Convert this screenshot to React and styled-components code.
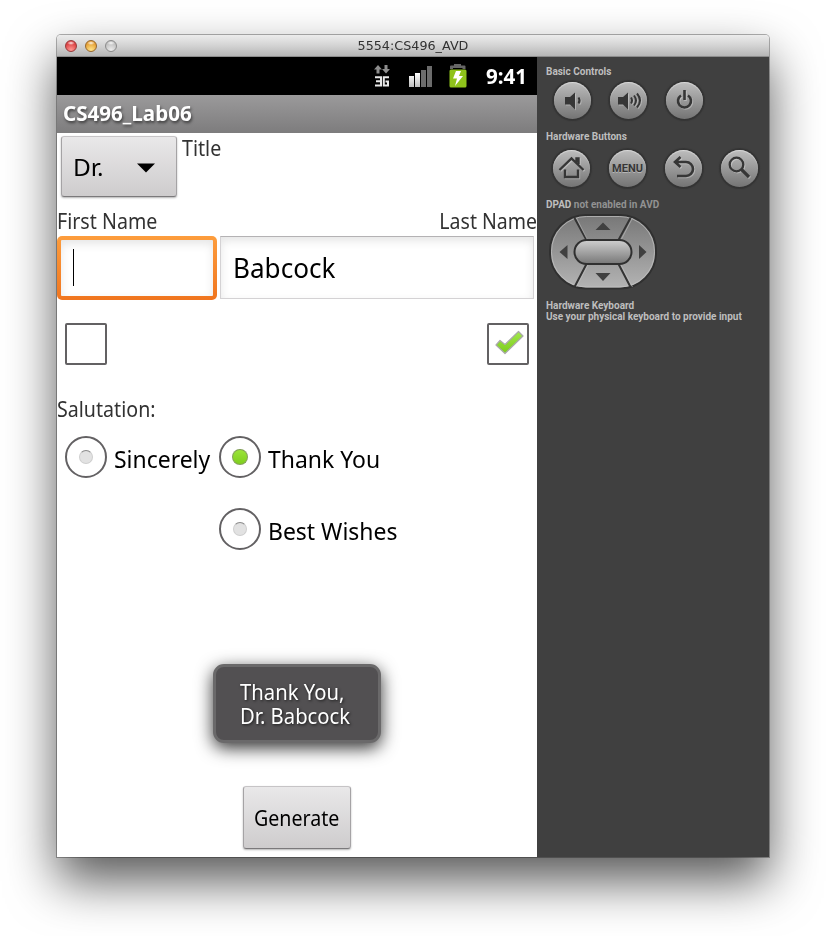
import React from "react";
import styled, { createGlobalStyle } from "styled-components";

const Global = createGlobalStyle`
  * { box-sizing: border-box; }
  body { margin: 0; background: #fff; overflow: hidden; font-family: "Noto Sans", "Open Sans", sans-serif; }
  svg { display: block; }
`;

const Desktop = styled.div`
  width: 826px;
  height: 936px;
  padding: 35px 57px 79px;
  background: #fff;
`;
const Window = styled.div`
  width: 712px;
  height: 822px;
  display: flex;
  flex-direction: column;
  border-radius: 4px 4px 0 0;
  box-shadow: 0 0 0 1px rgba(0, 0, 0, 0.3), 0 24px 50px rgba(0, 0, 0, 0.66);
`;
const TitleBar = styled.header`
  height: 22px;
  flex: none;
  display: grid;
  grid-template-columns: 60px 1fr 60px;
  align-items: center;
  border-radius: 4px 4px 0 0;
  background: linear-gradient(#ececec, #d6d6d6 45%, #b6b6b6);
  border-bottom: 1px solid #8c8c8c;
`;
const Lights = styled.div`
  display: flex;
  gap: 8px;
  padding: 1px 0 0 8px;
`;
const Light = styled.span`
  width: 12px;
  height: 12px;
  border-radius: 50%;
  border: 1px solid ${(p) => p.$ring};
  background: radial-gradient(ellipse 4px 2px at 50% 20%, rgba(255,255,255,.9), transparent),
    radial-gradient(circle at 50% 90%, ${(p) => p.$glow}, ${(p) => p.$color} 75%);
`;
/* Text condensed horizontally by $sx from its $from edge. */
const Text = styled.span`
  display: block;
  white-space: pre;
  font-size: ${(p) => p.$size || 21}px;
  line-height: ${(p) => p.$lh || 24}px;
  font-weight: ${(p) => p.$weight || 400};
  color: ${(p) => p.$color || "#323232"};
  transform: scaleX(${(p) => p.$sx || 0.935});
  transform-origin: ${(p) => p.$from || "left"} center;
`;
const WindowTitle = styled(Text)`
  font-family: "DejaVu Sans", sans-serif;
  text-align: center;
`;
const Body = styled.div`
  height: 800px;
  display: flex;
`;
const Phone = styled.main`
  position: relative;
  width: 480px;
  display: flex;
  flex-direction: column;
  background: #fff;
`;
const StatusBar = styled.div`
  height: 38px;
  display: flex;
  align-items: center;
  gap: 15px;
  background: #000;
  padding-left: 315px;
`;
const Clock = styled(Text)`
  margin-left: 3px;
`;
const AppBar = styled.div`
  height: 38px;
  padding: 6px;
  background: linear-gradient(#9b9a9b, #7d7c7d);
`;
const AppTitle = styled(Text)`
  text-shadow: 1px 2px 3px rgba(0, 0, 0, 0.55);
`;
const SpinnerRow = styled.div`
  display: flex;
  height: 76px;
  padding: 3px 0 0 4px;
  gap: 5px;
`;
const Button = styled.button`
  display: flex;
  align-items: center;
  justify-content: center;
  padding: 0;
  font-family: inherit;
  border: 1px solid;
  border-color: #c6c4c6 #a5a3a5 #7b797b;
  border-radius: 3px;
  background: linear-gradient(#e9e8e9, #cecccd);
  box-shadow: 0 1px 2px rgba(0, 0, 0, 0.3);
`;
const Spinner = styled(Button)`
  width: 116px;
  height: 61px;
  justify-content: space-between;
  padding: 2px 20px 0 11px;
`;
const SpinnerValue = styled(Text)`
  padding-bottom: 2px;
`;
const Generate = styled(Button)`
  width: 108px;
  height: 63px;
  margin: 206px 0 0 186px;
`;
const Spread = styled.div`
  display: flex;
  justify-content: space-between;
  height: ${(p) => p.$h}px;
  padding: ${(p) => p.$pad || "0"};
`;
const Fields = styled.div`
  display: flex;
  align-items: flex-start;
  gap: 3px;
  height: 87px;
`;
const Focused = styled.div`
  width: 160px;
  height: 64px;
  padding: 4px;
  border-radius: 5px;
  background: linear-gradient(#fd9d3d, #f0751f);
`;
const FocusedInner = styled.div`
  height: 100%;
  padding: 9px 0 0 12px;
  border-radius: 1px;
  background: #fff;
  box-shadow: inset 0 4px 10px rgba(0, 0, 0, 0.1);
`;
const Caret = styled.div`
  width: 1px;
  height: 37px;
  background: #000;
`;
const Field = styled.div`
  width: 314px;
  height: 63px;
  padding: 16px 12px;
  border: 1px solid #d4d2d4;
  border-top-color: #b4b2b4;
  background: #fff;
  box-shadow: inset 0 4px 10px rgba(0, 0, 0, 0.1);
`;
const CheckBox = styled.div`
  width: 42px;
  height: 42px;
  border: 2px solid #636163;
  border-radius: 2px;
`;
const Radios = styled.div`
  display: grid;
  grid-template-columns: 154px 1fr;
  grid-auto-rows: 72px;
  padding: 15px 0 0 8px;
`;
const RadioItem = styled.div`
  grid-column: ${(p) => p.$col};
  display: flex;
  gap: 7px;
  height: 42px;
`;
const RadioLabel = styled(Text)`
  padding-top: 8px;
`;
const Ring = styled.span`
  flex: none;
  width: 42px;
  height: 42px;
  border: 2px solid #636163;
  border-radius: 50%;
  display: flex;
  align-items: center;
  justify-content: center;
`;
const Dot = styled.i`
  width: ${(p) => (p.$on ? 16 : 14)}px;
  height: ${(p) => (p.$on ? 16 : 14)}px;
  border-radius: 50%;
  background: ${(p) => (p.$on ? "linear-gradient(#9be43a, #7fce1e)" : "#e2e2e2")};
  border: 1px solid ${(p) => (p.$on ? "#84a05a" : "#cfcfcf")};
  border-top-color: ${(p) => (p.$on ? "#7c9a50" : "#8a8a8a")};
`;
const Toast = styled.div`
  position: absolute;
  left: 156px;
  top: 607px;
  width: 168px;
  height: 79px;
  padding: 13px 0 0 24px;
  border: 3px solid #6a696a;
  border-radius: 11px;
  background: #525052;
  box-shadow: 0 5px 17px rgba(0, 0, 0, 0.8);
`;
const ToastText = styled(Text)`
  text-shadow: 1px 1px 3px rgba(0, 0, 0, 0.7);
`;
const Side = styled.aside`
  width: 232px;
  padding: 9px 0 0 9px;
  background: #404040;
  font-family: Roboto, sans-serif;
`;
const Caption = styled.div`
  height: ${(p) => p.$h || 12}px;
  font-size: 10px;
  line-height: 12px;
  font-weight: 700;
  white-space: nowrap;
  color: #bebebe;
`;
const Faint = styled.span`
  color: #929292;
`;
const Keys = styled.div`
  display: flex;
  gap: 19px;
  padding: ${(p) => p.$pad};
`;
const Key = styled.div`
  width: 37px;
  height: 37px;
  border-radius: 50%;
  display: flex;
  align-items: center;
  justify-content: center;
  background: linear-gradient(#bdbdbd, #747474);
  box-shadow: inset 0 1px 1px rgba(255, 255, 255, 0.45), 0 0 1px 2px #343434;
  color: #363636;
  font-size: 11px;
  font-weight: 700;
  text-shadow: 0 1px 0 rgba(255, 255, 255, 0.35);
  svg { flex: none; filter: drop-shadow(1px 1px 0 rgba(255, 255, 255, 0.3)); }
`;
const Pad = styled.div`
  padding: 3px 0 10px 3px;
`;

const Line = ({ children, w = 2.6 }) => (
  <svg width="31" height="31" viewBox="0 0 31 31" fill="none" stroke="#363636" strokeWidth={w}>{children}</svg>
);
const Speaker = ({ loud }) => (
  <Line w={2}>
    <path d={loud ? "M5 12h5l5-4.500v17L10 19.500H5z" : "M8 12h5l5-4.500v17l-5-5H8z"} fill="#363636" stroke="none" />
    {loud ? <path d="M18 12.500q2 3 0 6M21 10.500q4 5 0 10M24 8.500q6 7 0 14" /> : <path d="M21.500 12.500q2.200 3 0 6" />}
  </Line>
);

const Network = () => (
  <svg width="20" height="26" viewBox="0 0 20 26">
    <path d="M2 6.500L6 2l4 4.500H7.500v4h-3v-4zM10 6h2.500V2h3v4H18l-4 4.500z" fill="#8d8d8d" />
    <path d="M3 14.200h6v8.300H3M4 18.200h5M17 14.200h-5.200v8.300H16v-4h-2.500" fill="none" stroke="#e8e8e8" strokeWidth="2" />
  </svg>
);
const Signal = () => (
  <svg width="26" height="26" viewBox="0 0 26 26">
    <defs>
      <linearGradient id="bar" x1="0" y1="0" x2="0" y2="1"><stop offset="0" stopColor="#fff" /><stop offset="1" stopColor="#bdbdbd" /></linearGradient>
    </defs>
    <path d="M2 13h5v11H2zM8 10h5v14H8z" fill="url(#bar)" />
    <path d="M14 7h5v17h-5zM20 3h5v21h-5z" fill="#6c6c6c" />
  </svg>
);
const Battery = () => (
  <svg width="20" height="26" viewBox="0 0 20 26">
    <path d="M2 6V3.500q0-1 1-1h3V1h7v1.500h3.500q1 0 1 1V6h-3V5H5v1z" fill="#666" />
    <rect x="1.500" y="6.500" width="17" height="18" rx="1.500" fill="#8fc31b" />
    <path d="M8 8h5l-2 5h4L7 23l2-7.500H5z" fill="#fff" />
  </svg>
);
const Dpad = () => (
  <svg width="108" height="76" viewBox="0 0 108 76">
    <defs>
      <linearGradient id="pad" x1="0" y1="0" x2="0" y2="1"><stop offset="0" stopColor="#777" /><stop offset="1" stopColor="#b4b4b4" /></linearGradient>
      <linearGradient id="core" x1="0" y1="0" x2="0" y2="1"><stop offset="0" stopColor="#d0d0d0" /><stop offset="1" stopColor="#777" /></linearGradient>
    </defs>
    <rect x="1" y="1" width="106" height="73.500" rx="36" fill="url(#pad)" stroke="#303030" strokeWidth="2" />
    <rect x="2.500" y="2.500" width="103" height="70.500" rx="35" fill="none" stroke="#c4c4c4" strokeWidth=".7" />
    <path d="M25.500 4l12 22M81.500 4l-12 22M37.500 50l-12 23M69.500 50l12 23" stroke="#333" strokeWidth="2" />
    <path d="M27.500 4l11 22M83.500 4L72 26M39.500 50l-12 23M71.500 50l12 23" stroke="#c0c0c0" strokeWidth=".6" />
    <rect x="25.500" y="26" width="57" height="24" rx="12" fill="url(#core)" stroke="#303030" strokeWidth="2" />
    <path d="M46.500 16l7.500-7.500 7.500 7.500zM46.500 59h15L54 67zM10.500 38l8-7v14zM90 31l7.500 7-7.500 7z" fill="#404040" />
  </svg>
);

const Radio = ({ col, on, label }) => (
  <RadioItem $col={col}>
    <Ring><Dot $on={on} /></Ring>
    <RadioLabel $size={24} $lh={30} $color="#000" $sx={0.956}>{label}</RadioLabel>
  </RadioItem>
);

export default function App() {
  return (
    <Desktop>
      <Global />
      <Window>
        <TitleBar>
          <Lights>
            <Light $ring="#983a3a" $color="#d93a3c" $glow="#ff9a94" />
            <Light $ring="#96672c" $color="#e39a2e" $glow="#ffe58a" />
            <Light $ring="#8b8b8b" $color="#bcbcbc" $glow="#ececec" />
          </Lights>
          <WindowTitle $size={12.5} $lh={20} $from="center" $sx={1.02}>5554:CS496_AVD</WindowTitle>
        </TitleBar>
        <Body>
          <Phone>
            <StatusBar>
              <Network />
              <Signal />
              <Battery />
              <Clock $weight={700} $color="#fff" $sx={0.98}>9:41</Clock>
            </StatusBar>
            <AppBar><AppTitle $weight={700} $color="#fff" $sx={0.98}>CS496_Lab06</AppTitle></AppBar>
            <SpinnerRow>
              <Spinner>
                <SpinnerValue $size={24} $lh={30} $color="#000" $sx={1.02}>Dr.</SpinnerValue>
                <svg width="20" height="10" viewBox="0 0 20 10"><path d="M1 .5h18L10 9.500z" /></svg>
              </Spinner>
              <Text>Title</Text>
            </SpinnerRow>
            <Spread $h={27}>
              <Text>First Name</Text>
              <Text $from="right" $sx={0.93}>Last Name</Text>
            </Spread>
            <Fields>
              <Focused><FocusedInner><Caret /></FocusedInner></Focused>
              <Field><Text $size={27} $lh={30} $color="#000" $sx={0.967}>Babcock</Text></Field>
            </Fields>
            <Spread $h={74} $pad="0 8px">
              <CheckBox />
              <CheckBox>
                <svg width="38" height="38" viewBox="0 0 38 38">
                  <defs>
                    <linearGradient id="tick" x1="0" y1="0" x2="0" y2="1"><stop offset="0" stopColor="#a2e84c" /><stop offset="1" stopColor="#7ccb1c" /></linearGradient>
                  </defs>
                  <path d="M7 20l4-4.500 5 4L29.500 6.500l4.500 4.500L16 28.500z" fill="url(#tick)" stroke="#aaa8aa" strokeWidth="1.200" strokeLinejoin="round" />
                </svg>
              </CheckBox>
            </Spread>
            <Text>Salutation:</Text>
            <Radios>
              <Radio col={1} label="Sincerely" />
              <Radio col={2} on label="Thank You" />
              <Radio col={2} label="Best Wishes" />
            </Radios>
            <Generate><Text $color="#000" $from="center">Generate</Text></Generate>
            <Toast>
              <ToastText $color="#fff" $sx={0.965}>{"Thank You,\nDr. Babcock"}</ToastText>
            </Toast>
          </Phone>
          <Side>
            <Caption>Basic Controls</Caption>
            <Keys $pad="4px 0 12px 8px">
              <Key><Speaker /></Key>
              <Key><Speaker loud /></Key>
              <Key><Line><path d="M12 10.500a6.500 6.500 0 1 0 7 0M15.500 5v10" /></Line></Key>
            </Keys>
            <Caption>Hardware Buttons</Caption>
            <Keys $pad="7px 0 12px 7px">
              <Key><Line w={2.4}><path d="M3.500 17L15.500 5.500 27.500 17M20.500 9V5.500h2V11M9 16.500V24h13v-7.500" /></Line></Key>
              <Key>MENU</Key>
              <Key><Line w={2.6}><path d="M12.500 4L7 9l5.500 5M7.500 9H18a7 7 0 0 1 0 14H9" /></Line></Key>
              <Key><Line w={2.3}><circle cx="12.500" cy="11.500" r="6.800" /><path d="M17.500 16.500l7.500 7.500" strokeWidth="3.200" /></Line></Key>
            </Keys>
            <Caption>DPAD <Faint>not enabled in AVD</Faint></Caption>
            <Pad><Dpad /></Pad>
            <Caption $h={11}>Hardware Keyboard</Caption>
            <Caption>Use your physical keyboard to provide input</Caption>
          </Side>
        </Body>
      </Window>
    </Desktop>
  );
}
